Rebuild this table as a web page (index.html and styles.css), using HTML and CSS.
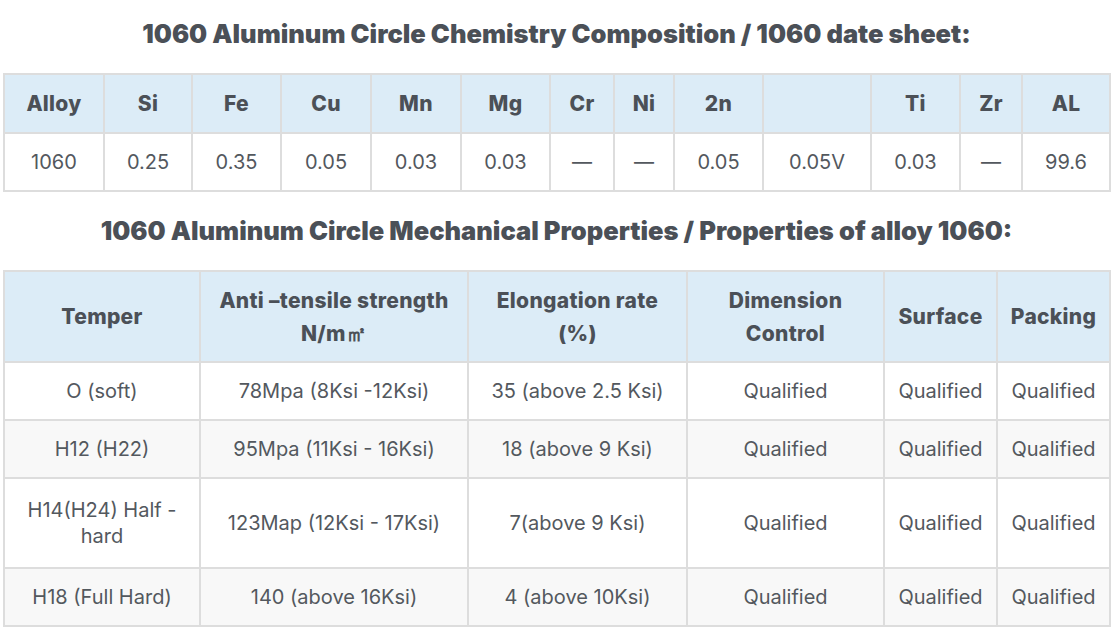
FILE: index.html
```html
<!DOCTYPE html>
<html>
<head>
<meta charset="utf-8">
<link rel="stylesheet" href="styles.css">
</head>
<body>
<div class="page">
  <h2 class="title">1060 Aluminum Circle Chemistry Composition / 1060 date sheet:</h2>
  <table class="tbl chem">
    <colgroup>
      <col style="width:100px"><col style="width:88px"><col style="width:89px"><col style="width:90px"><col style="width:90px"><col style="width:89px"><col style="width:64px"><col style="width:60px"><col style="width:89px"><col style="width:108px"><col style="width:89px"><col style="width:62px"><col style="width:88px">
    </colgroup>
    <thead>
      <tr><th>Alloy</th><th>Si</th><th>Fe</th><th>Cu</th><th>Mn</th><th>Mg</th><th>Cr</th><th>Ni</th><th>2n</th><th></th><th>Ti</th><th>Zr</th><th>AL</th></tr>
    </thead>
    <tbody>
      <tr><td>1060</td><td>0.25</td><td>0.35</td><td>0.05</td><td>0.03</td><td>0.03</td><td>—</td><td>—</td><td>0.05</td><td>0.05V</td><td>0.03</td><td>—</td><td>99.6</td></tr>
    </tbody>
  </table>
  <h2 class="title title2">1060 Aluminum Circle Mechanical Properties / Properties of alloy 1060:</h2>
  <table class="tbl mech">
    <colgroup>
      <col style="width:196px"><col style="width:268px"><col style="width:219px"><col style="width:197px"><col style="width:113px"><col style="width:113px">
    </colgroup>
    <thead>
      <tr><th>Temper</th><th>Anti –tensile strength<br>N/m㎡</th><th>Elongation rate<br>(%)</th><th>Dimension<br>Control</th><th>Surface</th><th>Packing</th></tr>
    </thead>
    <tbody>
      <tr><td>O (soft)</td><td>78Mpa (8Ksi -12Ksi)</td><td>35 (above 2.5 Ksi)</td><td>Qualified</td><td>Qualified</td><td>Qualified</td></tr>
      <tr class="alt"><td>H12 (H22)</td><td>95Mpa (11Ksi - 16Ksi)</td><td>18 (above 9 Ksi)</td><td>Qualified</td><td>Qualified</td><td>Qualified</td></tr>
      <tr class="tall"><td>H14(H24) Half -<br>hard</td><td>123Map (12Ksi - 17Ksi)</td><td>7(above 9 Ksi)</td><td>Qualified</td><td>Qualified</td><td>Qualified</td></tr>
      <tr class="alt"><td>H18 (Full Hard)</td><td>140 (above 16Ksi)</td><td>4 (above 10Ksi)</td><td>Qualified</td><td>Qualified</td><td>Qualified</td></tr>
    </tbody>
  </table>
</div>
</body>
</html>
```

FILE: styles.css
```css
html, body {
  margin: 0;
  padding: 0;
  background: #ffffff;
}
body {
  font-family: "Inter", "Noto Sans", "DejaVu Sans", sans-serif;
  color: #50555b;
}
.page {
  padding: 0 4px 0 3px;
}
.title {
  margin: 0;
  padding: 19px 0 0;
  height: 73px;
  box-sizing: border-box;
  text-align: center;
  font-size: 25.5px;
  font-weight: 900;
  color: #4b5057;
  letter-spacing: 0;
  line-height: 30px;
}
.title2 {
  padding-top: 24px;
  height: 78px;
}
.tbl {
  border-collapse: collapse;
  table-layout: fixed;
  width: 1107px;
  border: 2px solid #dddddd;
}
.tbl th, .tbl td {
  border: 2px solid #dddddd;
  text-align: center;
  vertical-align: middle;
  padding: 0 4px;
}
.tbl th {
  background: #dcecf7;
  font-size: 21px;
  font-weight: 800;
  color: #4b5057;
  line-height: 33px;
  letter-spacing: 0.3px;
}
.tbl td {
  font-size: 20px;
  font-weight: 400;
  color: #53585e;
  line-height: 26px;
  height: 56px;
}
.chem th {
  height: 57px;
}
.mech th {
  height: 89px;
}
.mech tr.alt td {
  background: #f8f8f8;
}
.mech tr.tall td {
  height: 88px;
}
```
